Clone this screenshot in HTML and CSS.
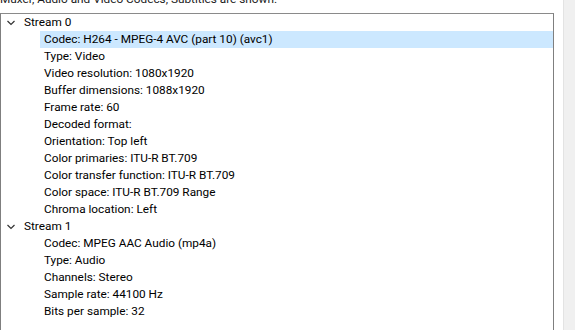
FILE: index.html
```html
<!DOCTYPE html>
<html lang="en">
<head>
    <meta charset="UTF-8">
    <title>Codec Information</title>
    <link rel="stylesheet" href="styles.css">
</head>
<body>
    <div class="dialog">
        <div class="panel">
            <div class="hint">Muxer, Audio and Video Codecs, Subtitles are shown.</div>
            <div class="tree">
                <!-- Stream 0 -->
                <div class="node">
                    <span class="chevron"><svg width="8" height="6" viewBox="0 0 8 6"><path d="M0.5 1 L4 4.5 L7.5 1" fill="none" stroke="#333" stroke-width="1.2"/></svg></span>
                    <span>Stream 0</span>
                </div>
                <div class="leaf selected">Codec: H264 - MPEG-4 AVC (part 10) (avc1)</div>
                <div class="leaf">Type: Video</div>
                <div class="leaf">Video resolution: 1080x1920</div>
                <div class="leaf">Buffer dimensions: 1088x1920</div>
                <div class="leaf">Frame rate: 60</div>
                <div class="leaf">Decoded format: </div>
                <div class="leaf">Orientation: Top left</div>
                <div class="leaf">Color primaries: ITU-R BT.709</div>
                <div class="leaf">Color transfer function: ITU-R BT.709</div>
                <div class="leaf">Color space: ITU-R BT.709 Range</div>
                <div class="leaf">Chroma location: Left</div>

                <!-- Stream 1 -->
                <div class="node">
                    <span class="chevron"><svg width="8" height="6" viewBox="0 0 8 6"><path d="M0.5 1 L4 4.5 L7.5 1" fill="none" stroke="#333" stroke-width="1.2"/></svg></span>
                    <span>Stream 1</span>
                </div>
                <div class="leaf">Codec: MPEG AAC Audio (mp4a)</div>
                <div class="leaf">Type: Audio</div>
                <div class="leaf">Channels: Stereo</div>
                <div class="leaf">Sample rate: 44100 Hz</div>
                <div class="leaf">Bits per sample: 32</div>
            </div>
        </div>
        <div class="scroll-gutter"></div>
    </div>
</body>
</html>
```

FILE: styles.css
```css
body {
    margin: 0;
    background-color: #ffffff;
    font-family: Roboto, "Open Sans", Arial, sans-serif;
    font-size: 11.8px;
    color: #000000;
    overflow: hidden;
}

.dialog {
    display: flex;
    height: 330px;
    overflow: hidden;
}

.panel {
    width: 554px;
    flex: none;
}

.hint {
    height: 13px;
    line-height: 13px;
    margin-top: -7px;
    padding-bottom: 7px;
    white-space: nowrap;
    overflow: hidden;
    color: #1a1a1a;
}

.tree {
    border: 1px solid #7f7f7f;
    border-top-color: #8a8a8a;
    height: 400px;
}

.node,
.leaf {
    height: 17px;
    line-height: 17px;
    white-space: nowrap;
}

.node {
    display: flex;
    align-items: center;
}

.chevron {
    width: 23px;
    padding-left: 6px;
    box-sizing: border-box;
    display: flex;
    align-items: center;
}

.leaf {
    padding-left: 43px;
}

.leaf.selected {
    margin-left: 39px;
    padding-left: 4px;
    background-color: #cce8ff;
}

.scroll-gutter {
    flex: 1;
    margin-left: 9px;
    border-left: 1px solid #e3e3e3;
    background-color: #f0f0f0;
}
```
